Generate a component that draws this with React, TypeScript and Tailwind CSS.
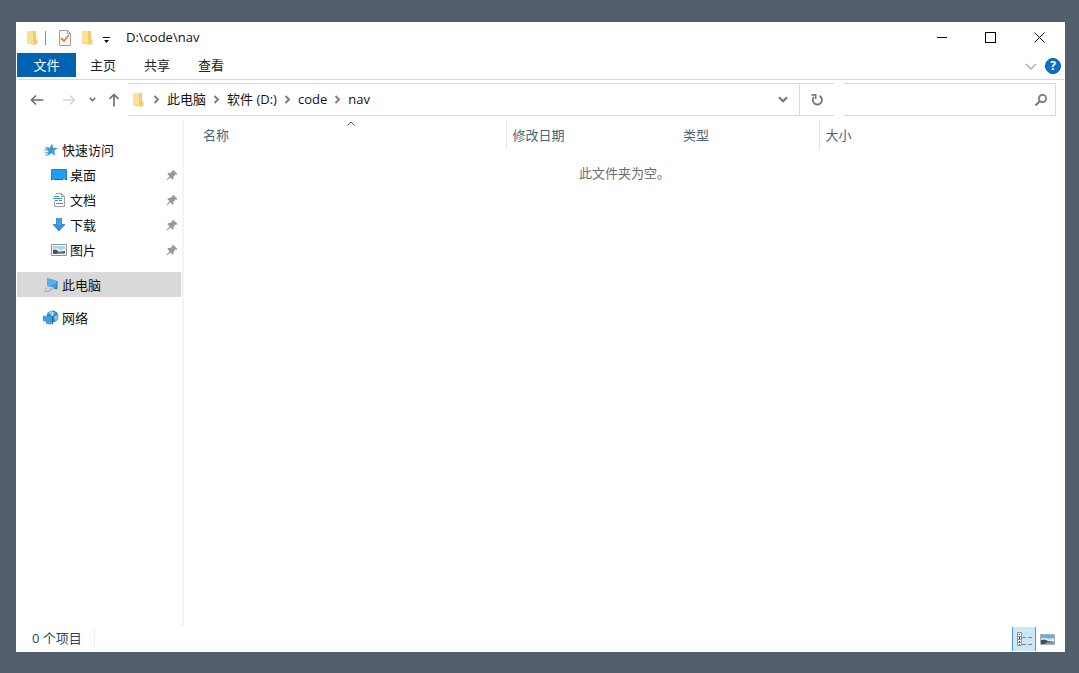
import type { ReactNode } from "react";

type IconProps = { className?: string };

function FolderIcon({ className = "" }: IconProps) {
  return (
    <svg className={`h-4 w-3 shrink-0 ${className}`} viewBox="0 0 12 16" aria-hidden="true">
      <path d="M1 1h7v13H1z" fill="#fbe09a" />
      <path d="M7 1h3v8l1.500 1v4L7 15z" fill="#f5cb68" />
      <path d="M1 13.500l7-1V15z" fill="#f8d98b" />
    </svg>
  );
}

function PropertiesIcon() {
  return (
    <svg className="h-4 w-[14px] shrink-0" viewBox="0 0 14 16" aria-hidden="true">
      <path d="M1.500.5h8l3 3v12h-11z" fill="#f7f9fc" stroke="#979ea8" />
      <path d="M9.500.5v3h3" fill="none" stroke="#979ea8" />
      <path d="M3 8l3 3 5-6" fill="none" stroke="#e0813c" strokeWidth="1.800" />
    </svg>
  );
}

function ChevronRight() {
  return (
    <svg className="h-[9px] w-[7px] shrink-0" viewBox="0 0 7 9" aria-hidden="true">
      <path d="M1.500 1l3.500 3.500L1.500 8" fill="none" stroke="#808080" strokeWidth="2" />
    </svg>
  );
}

function ChevronDown({ className = "" }: IconProps) {
  return (
    <svg className={`shrink-0 ${className}`} viewBox="0 0 10 7" aria-hidden="true">
      <path d="M1 1.200l4 4 4-4" fill="none" stroke="currentColor" strokeWidth="2.200" />
    </svg>
  );
}

function ArrowIcon({ className = "" }: IconProps) {
  return (
    <svg className={`h-3 w-[14px] shrink-0 ${className}`} viewBox="0 0 14 12" aria-hidden="true">
      <path d="M13.500 6H1.500M6 1.500L1.500 6 6 10.500" fill="none" stroke="currentColor" strokeWidth="1.700" />
    </svg>
  );
}

function PinIcon() {
  return (
    <svg className="h-3 w-3 shrink-0" viewBox="0 0 12 12" aria-hidden="true">
      <path d="M7 .5L11.500 5l-1 .8-.9-.2-2.200 2.200.1 2-1 .9-2.200-2.200L1 11.500l-.5-.5 3-3.800L1.300 5l1-1 2 .1 2.300-2.200-.2-.7z" fill="#939ba2" />
    </svg>
  );
}

function StarIcon() {
  return (
    <svg className="h-[14px] w-[14px] shrink-0" viewBox="0 0 14 14" aria-hidden="true">
      <path d="M8 .5l1.200 4.200 4.500.3-3.500 2.800 1 4.700-3.700-2.300L3 13l1.500-4.500L1.500 5.500l4.200-.8z" fill="#3b9ce2" />
      <path d="M1 4.500h4M0 7h4M1 9.500h3M1 12.500l3-2" stroke="#65b5ea" />
    </svg>
  );
}

function DesktopIcon() {
  return (
    <svg className="h-3 w-4 shrink-0" viewBox="0 0 16 12" aria-hidden="true">
      <path d="M.5.5h15v10H.5z" fill="#1e9dfb" stroke="#1785d8" />
      <path d="M0 10.500h16" stroke="#1568a8" />
      <path d="M2 10.500h1M12 10.500h2" stroke="#9bd5ff" />
    </svg>
  );
}

function DocumentIcon() {
  return (
    <svg className="h-[14px] w-3 shrink-0" viewBox="0 0 12 14" aria-hidden="true">
      <path d="M3 .5h5.500l3 3v10H1.500V8" fill="#fafcfd" stroke="#9aa2a8" />
      <path d="M8.500.5v3h3" fill="none" stroke="#9aa2a8" />
      <path d="M1 3.500h5M0 5.500h9M3 10.500h7" stroke="#3f93bd" />
      <path d="M2 7.500h3M6 7.500h3" stroke="#4d85ad" />
    </svg>
  );
}

function DownloadIcon() {
  return (
    <svg className="h-[14px] w-3 shrink-0" viewBox="0 0 12 14" aria-hidden="true">
      <path d="M3 0h6v6h3v1l-6 6.500L0 7V6h3z" fill="#388fd2" />
      <path d="M4 0h4v7H4z" fill="#459fde" />
    </svg>
  );
}

function PictureIcon() {
  return (
    <svg className="h-3 w-4 shrink-0" viewBox="0 0 16 12" aria-hidden="true">
      <path d="M.5.5h15v11H.5z" fill="#fff" stroke="#8a9299" />
      <path d="M2 2h12v8H2z" fill="#a9d5f1" />
      <path d="M2 5l4-1 3 2 5-1v2H2z" fill="#e4f0f4" />
      <path d="M2 6l3-.5L8 8l6-1v3H2z" fill="#3e5564" />
      <path d="M6 8.500h8V10H6z" fill="#6b93a9" />
    </svg>
  );
}

function ComputerIcon() {
  return (
    <svg className="h-[14px] w-[14px] shrink-0" viewBox="0 0 14 14" aria-hidden="true">
      <path d="M3 0l10 3v7.500L3 8z" fill="#369de3" />
      <path d="M3 0l10 3v2L6 8.500 3 8z" fill="#55aeea" />
      <path d="M13 3v8l-3-.8" fill="none" stroke="#3c7197" />
      <path d="M1 11l5-1.500 5 2-5 2z" fill="#d0d5d9" />
      <path d="M1 10.500l2-.5M0 12.500l4 1 3-1.500M6 11h3" fill="none" stroke="#9aa3aa" />
    </svg>
  );
}

function NetworkIcon() {
  return (
    <svg className="h-[15px] w-4 shrink-0" viewBox="0 0 16 15" aria-hidden="true">
      <circle cx="9.500" cy="6.500" r="6" fill="#3c86bd" />
      <path d="M5 3c3-3 6-1 7 0L9 6zM11 6l4-1c0 4-1 5-3 6z" fill="#86c4e6" />
      <path d="M8 1l2 3-1 2" fill="none" stroke="#d0edf8" />
      <path d="M0 5.500l10 1.500v7L0 11z" fill="#37a1e8" />
      <path d="M10 7v7l-1-.3V6.800z" fill="#2b668e" />
      <path d="M3 12l5 1.500v1l-5-1z" fill="#347ba8" />
    </svg>
  );
}

const pinnedItems = [
  { label: "桌面", icon: <DesktopIcon /> },
  { label: "文档", icon: <DocumentIcon /> },
  { label: "下载", icon: <DownloadIcon /> },
  { label: "图片", icon: <PictureIcon /> },
];

const pathParts = ["此电脑", "软件 (D:)", "code", "nav"];

function TitleBar() {
  return (
    <header className="flex h-[31px] items-center pl-[10px] text-[#111]">
      <FolderIcon />
      <span className="ml-[7px] h-[14px] w-px bg-[#8e8e8e]" />
      <button type="button" aria-label="属性" className="ml-3">
        <PropertiesIcon />
      </button>
      <button type="button" aria-label="新建文件夹" className="ml-[9px]">
        <FolderIcon />
      </button>
      <button type="button" aria-label="自定义快速访问工具栏" className="mt-1 ml-[10px]">
        <svg className="h-[6px] w-[7px]" viewBox="0 0 7 6" aria-hidden="true">
          <path d="M0 0h7v1H0zM1 3h5L3.500 6z" fill="#111" />
        </svg>
      </button>
      <h1 className="mb-[2px] ml-4 flex-1">D:\code\nav</h1>
      <button type="button" aria-label="最小化" className="grid h-full w-[49px] place-items-center">
        <span className="h-px w-[10px] bg-black" />
      </button>
      <button type="button" aria-label="最大化" className="grid h-full w-12 place-items-center">
        <span className="h-[11px] w-[11px] border border-black" />
      </button>
      <button type="button" aria-label="关闭" className="grid h-full w-[51px] place-items-center">
        <svg className="h-[11px] w-[11px]" viewBox="0 0 11 11" aria-hidden="true">
          <path d="M.5.5l10 10M10.500.5l-10 10" stroke="#111" />
        </svg>
      </button>
    </header>
  );
}

function RibbonTabs() {
  return (
    <nav className="mx-px flex h-[27px] items-center border-b border-[#d9d9d9] text-[#222]">
      <button type="button" className="mb-[2px] h-6 w-[59px] bg-[#0063b1] text-white">
        文件
      </button>
      {["主页", "共享", "查看"].map((tab) => (
        <button key={tab} type="button" className="mb-[2px] h-6 w-[54px]">
          {tab}
        </button>
      ))}
      <button type="button" aria-label="展开功能区" className="ml-auto text-[#aaa]">
        <svg className="h-[7px] w-3" viewBox="0 0 12 7" aria-hidden="true">
          <path d="M1 1l5 5 5-5" fill="none" stroke="currentColor" strokeWidth="1.300" />
        </svg>
      </button>
      <button
        type="button"
        aria-label="帮助"
        className="mr-[3px] ml-2 grid h-4 w-4 place-items-center rounded-full border border-[#07549b] bg-[#0872c8] text-[12px] leading-3 font-bold text-white"
      >
        ?
      </button>
    </nav>
  );
}

function AddressBar() {
  return (
    <div className="flex h-[39px] items-center pr-[9px] text-[#707070]">
      <button type="button" aria-label="后退" className="ml-[14px]">
        <ArrowIcon />
      </button>
      <button type="button" aria-label="前进" disabled className="ml-[18px] text-[#d5d5d5]">
        <ArrowIcon className="rotate-180" />
      </button>
      <button type="button" aria-label="最近浏览的位置" className="ml-[13px]">
        <ChevronDown className="h-[5px] w-[7px]" />
      </button>
      <button type="button" aria-label="上移" className="ml-[11px]">
        <ArrowIcon className="rotate-90" />
      </button>
      <div className="ml-[7px] flex h-[33px] flex-1 items-center border-y border-[#d9d9d9] pl-1 text-[#111]">
        <FolderIcon />
        <ol className="mb-px ml-[9px] flex flex-1 items-center gap-[7px]">
          {pathParts.map((part) => (
            <li key={part} className="flex items-center gap-[7px]">
              <ChevronRight />
              <a href="#">{part}</a>
            </li>
          ))}
        </ol>
        <button type="button" aria-label="以前的位置" className="mr-[11px] text-[#777]">
          <ChevronDown className="h-[7px] w-[10px]" />
        </button>
        <button
          type="button"
          aria-label="刷新"
          className="grid h-full w-[35px] place-items-center border-l border-[#d9d9d9] text-[#777]"
        >
          <svg className="h-3 w-3" viewBox="0 0 12 12" aria-hidden="true">
            <path d="M8.500 1.900A4.600 4.600 0 1 1 3 2.800" fill="none" stroke="currentColor" strokeWidth="1.800" />
            <path d="M.5 0h5v5H4V1.800H.5z" fill="currentColor" />
          </svg>
        </button>
      </div>
      <label className="ml-[9px] flex h-[33px] w-[213px] items-center border-y border-r border-[#d9d9d9] pr-[8px]">
        <input aria-label="搜索" className="h-full min-w-0 flex-1 px-2 text-[#111] outline-none" />
        <svg className="h-3 w-3 text-[#777]" viewBox="0 0 12 12" aria-hidden="true">
          <circle cx="7.500" cy="4.500" r="3.600" fill="none" stroke="currentColor" strokeWidth="1.700" />
          <path d="M5 7l-4.500 4.500" stroke="currentColor" strokeWidth="2" />
        </svg>
      </label>
    </div>
  );
}

type SideItemProps = {
  label: string;
  icon: ReactNode;
  nested?: boolean;
  selected?: boolean;
};

function SideItem({ label, icon, nested = false, selected = false }: SideItemProps) {
  return (
    <a
      href="#"
      className={`flex h-[25px] items-center pr-[3px] text-[#111] ${nested ? "pl-[33px]" : "pl-[25px]"} ${
        selected ? "bg-[#d9d9d9]" : ""
      }`}
    >
      <span className="mr-[2px] grid w-[18px] place-items-center">{icon}</span>
      <span className="flex-1">{label}</span>
      {nested && <PinIcon />}
    </a>
  );
}

function Sidebar() {
  return (
    <nav className="flex w-[168px] shrink-0 flex-col gap-2 border-r-2 border-[#f4f4f4] pt-4 pr-px pl-px">
      <div className="mb-[2px]">
        <SideItem label="快速访问" icon={<StarIcon />} />
        {pinnedItems.map((item) => (
          <SideItem key={item.label} label={item.label} icon={item.icon} nested />
        ))}
      </div>
      <SideItem label="此电脑" icon={<ComputerIcon />} selected />
      <SideItem label="网络" icon={<NetworkIcon />} />
    </nav>
  );
}

function FileList() {
  return (
    <main className="flex-1">
      <table className="w-full table-fixed border-collapse text-left">
        <colgroup>
          <col className="w-[322px]" />
          <col className="w-[170px]" />
          <col className="w-[143px]" />
          <col />
        </colgroup>
        <thead className="text-[#48657a]">
          <tr className="h-[29px]">
            <th className="relative border-r border-[#e5e5e5] pb-[2px] pl-[19px] font-normal">
              名称
              <svg className="absolute top-0 right-[151px] h-[5px] w-2" viewBox="0 0 8 5" aria-hidden="true">
                <path d="M.5 4.500L4 1l3.500 3.500" fill="none" stroke="#555" />
              </svg>
            </th>
            <th className="pb-[2px] pl-[6px] font-normal">修改日期</th>
            <th className="border-r border-[#e5e5e5] pb-[2px] pl-[7px] font-normal">类型</th>
            <th className="pb-[2px] pl-[6px] font-normal">大小</th>
          </tr>
        </thead>
        <tbody>
          <tr>
            <td colSpan={4} className="pt-[13px] text-center text-[#6d6d6d]">
              此文件夹为空。
            </td>
          </tr>
        </tbody>
      </table>
    </main>
  );
}

function StatusBar() {
  return (
    <footer className="flex h-[26px] items-center pr-[10px] pl-4 text-[#29465f]">
      <span className="mb-[2px] border-r border-[#eee] pr-3">0 个项目</span>
      <button
        type="button"
        aria-label="详细信息"
        aria-pressed="true"
        className="ml-auto grid h-6 w-6 place-items-center border-x border-[#3f9fd2] bg-[#cce8f6]"
      >
        <svg className="h-4 w-4" viewBox="0 0 16 16" aria-hidden="true">
          <path d="M1.500 1.500h4v13h-4zM1.500 5.500h4M1.500 8.500h4M1.500 11.500h4" fill="#fff" stroke="#929292" />
          <path d="M3 3h1v1H3zM3 6h1v2H3zM3 10h1v1H3zM3 13h1v1H3z" fill="#444" />
          <path d="M6 6.500h4M12 6.500h4M6 13.500h4M12 13.500h4" stroke="#858585" />
        </svg>
      </button>
      <button type="button" aria-label="大图标" className="ml-1">
        <svg className="h-[11px] w-[15px]" viewBox="0 0 15 11" aria-hidden="true">
          <path d="M.5.5h14v10H.5z" fill="#a9d6f1" stroke="#a9afb4" />
          <path d="M1 1h13v3H1z" fill="#68aee1" />
          <path d="M1 5l4-1 4 2 5-1v2H1z" fill="#e8f2f4" />
          <path d="M1 6l4-.5L8 7l6 1v2H1z" fill="#3f5060" />
          <path d="M7 8h7v2H5z" fill="#7999ad" />
        </svg>
      </button>
    </footer>
  );
}

export default function App() {
  return (
    <div className="flex min-h-screen flex-col bg-[#525e6b] pt-[22px] pr-[14px] pb-[21px] pl-4 font-['Open_Sans','Noto_Sans_CJK_SC',sans-serif] text-[13px] leading-5">
      <div className="flex flex-1 flex-col bg-white">
        <TitleBar />
        <RibbonTabs />
        <AddressBar />
        <div className="mt-[2px] flex flex-1">
          <Sidebar />
          <FileList />
        </div>
        <StatusBar />
      </div>
    </div>
  );
}
